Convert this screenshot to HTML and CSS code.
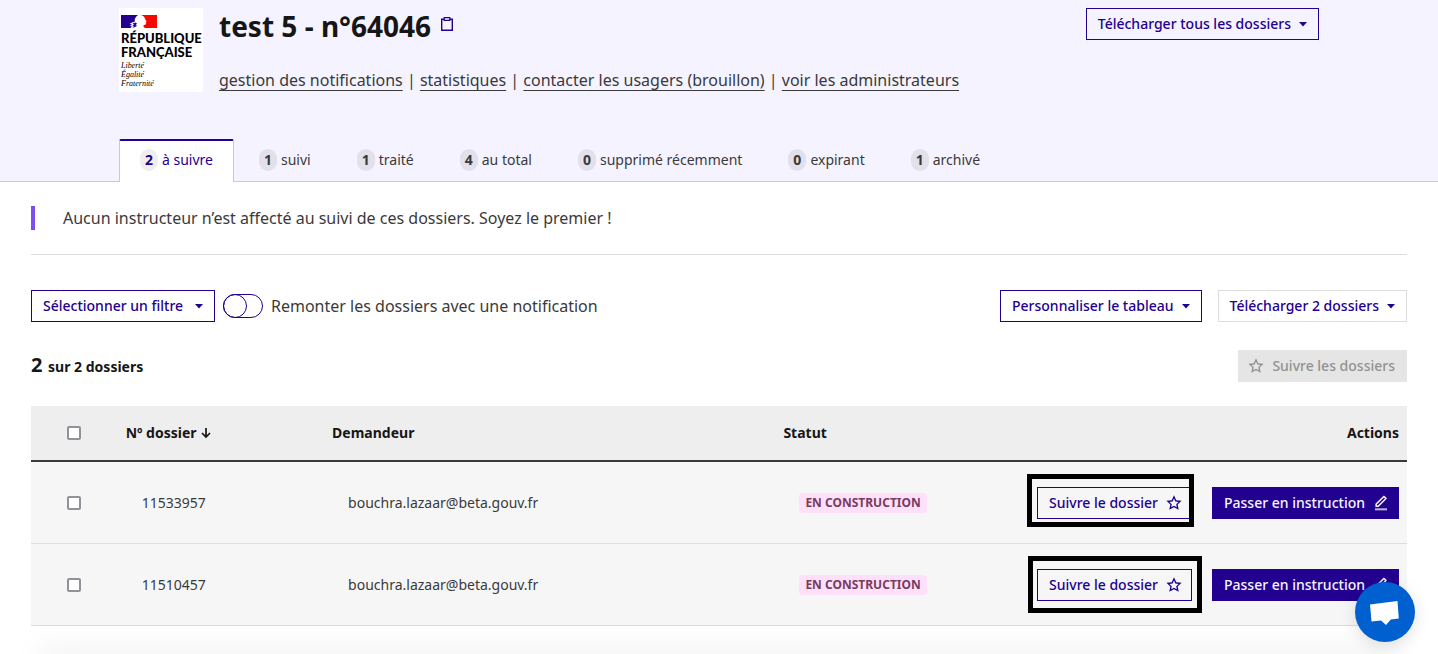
FILE: index.html
```html
<!DOCTYPE html>
<html lang="fr">
<head>
<meta charset="utf-8">
<meta name="viewport" content="width=device-width, initial-scale=1">
<title>test 5 - n°64046</title>
<link rel="stylesheet" href="styles.css">
</head>
<body>
<svg class="sprite" aria-hidden="true">
  <symbol id="caret" viewBox="0 0 8 5"><path d="M0 0h8L4 4.500z"/></symbol>
  <symbol id="star" viewBox="0 0 24 24"><path d="M12 18.300 4.900 22.200 6.500 14.300.6 8.800l8-1L12 .5l3.400 7.300 8 1-5.900 5.500 1.600 7.900zm0-2.300 4.200 2.400-.9-4.700 3.500-3.300-4.800-.6-2-4.400-2 4.400-4.800.6 3.500 3.300-.9 4.700z"/></symbol>
  <symbol id="edit" viewBox="0 0 24 24"><path d="M7.400 15.800 18 5.200l-1.600-1.600L5.800 14.200v1.600zm.9 2.200H3.600v-4.700L15.500 1.400a1.200 1.200 0 0 1 1.800 0l2.900 2.900a1.200 1.200 0 0 1 0 1.800z"/><path opacity=".75" d="M3 20h18v3H3z"/></symbol>
</svg>

<header class="header">
  <div class="container banner">
    <div class="logo">
      <svg class="flag" viewBox="0 0 36 13" aria-hidden="true">
        <path fill="#220090" d="M0 0h17l-2.200 2-1.200 3 .4 1.500L11 7.500 8.500 9l2.500.3L9 11l2 .6-1.500 1.400H0z"/>
        <path fill="#f60700" d="M20 0h16v13H24l-1.500-1.300.2-1.700 1.700-.3.800-1.500-.5-1 1-.7-1.700-2.500C23.800 2 22.500.8 20 0z"/>
        <path fill="#220090" d="m11.500 8.500 3-1 1.500 1-1.500 1.500 1-.2v1.500l-2.500 1.200-2-.3 2.500-1.200-2.500-.3 2-1z"/>
      </svg>
      <strong class="logo-name">RÉPUBLIQUE<br>FRANÇAISE</strong>
      <em class="logo-motto">Liberté<br>Égalité<br>Fraternité</em>
    </div>
    <div class="heading">
      <div class="title-row">
        <h1 class="title">test 5 - n°64046</h1>
        <button class="copy" type="button" aria-label="Copier le numéro">
          <svg viewBox="0 0 12 14" aria-hidden="true"><path d="M.7 2.200h10.600v11.100H.7z" fill="none" stroke="currentColor" stroke-width="1.400"/><path d="M3.200.7h5.600v2.600H3.200z" fill="#f5f3ff" stroke="currentColor" stroke-width="1.200"/></svg>
        </button>
      </div>
      <nav class="links">
        <a href="#">gestion des notifications</a> | <a href="#">statistiques</a> | <a href="#">contacter les usagers (brouillon)</a> | <a href="#">voir les administrateurs</a>
      </nav>
    </div>
    <button class="btn" type="button">Télécharger tous les dossiers <svg class="caret"><use href="#caret"/></svg></button>
  </div>
  <nav class="container tabs">
    <a class="tab tab-active" href="#" aria-current="page"><span class="count">2</span>à suivre</a>
    <a class="tab" href="#"><span class="count">1</span>suivi</a>
    <a class="tab" href="#"><span class="count">1</span>traité</a>
    <a class="tab" href="#"><span class="count">4</span>au total</a>
    <a class="tab" href="#"><span class="count">0</span>supprimé récemment</a>
    <a class="tab" href="#"><span class="count">0</span>expirant</a>
    <a class="tab" href="#"><span class="count">1</span>archivé</a>
  </nav>
</header>

<main class="main">
  <p class="callout">Aucun instructeur n’est affecté au suivi de ces dossiers. Soyez le premier !</p>
  <div class="toolbar">
    <button class="btn btn-filter" type="button">Sélectionner un filtre <svg class="caret"><use href="#caret"/></svg></button>
    <input class="toggle" type="checkbox" id="notif">
    <label class="toggle-label" for="notif">Remonter les dossiers avec une notification</label>
    <div class="toolbar-end">
      <button class="btn" type="button">Personnaliser le tableau <svg class="caret"><use href="#caret"/></svg></button>
      <button class="btn btn-soft" type="button">Télécharger 2 dossiers <svg class="caret"><use href="#caret"/></svg></button>
    </div>
  </div>
  <div class="summary">
    <p class="total"><span class="total-number">2</span> sur 2 dossiers</p>
    <button class="btn btn-disabled" type="button" disabled><svg class="icon"><use href="#star"/></svg>Suivre les dossiers</button>
  </div>

  <table class="table">
    <colgroup><col class="col-check"><col class="col-number"><col class="col-applicant"><col></colgroup>
    <thead>
      <tr>
        <th class="check"><input class="box" type="checkbox" aria-label="Tout sélectionner"></th>
        <th><span class="sort">Nº dossier <svg class="arrow" viewBox="0 0 10 12" aria-hidden="true"><path d="M5 1v9M1 6l4 4 4-4" fill="none" stroke="currentColor" stroke-width="1.700"/></svg></span></th>
        <th>Demandeur</th>
        <th><div class="last-head"><span>Statut</span><span>Actions</span></div></th>
      </tr>
    </thead>
    <tbody>
      <tr>
        <td class="check"><input class="box" type="checkbox" aria-label="Dossier 11533957"></td>
        <td>11533957</td>
        <td>bouchra.lazaar@beta.gouv.fr</td>
        <td class="last"><div class="last-cell"><span class="badge">EN CONSTRUCTION</span>
          <div class="actions">
            <div class="marked"><button class="btn btn-icon" type="button">Suivre le dossier<svg class="icon"><use href="#star"/></svg></button><span class="frame frame-tight"></span></div>
            <button class="btn btn-icon btn-primary" type="button">Passer en instruction<svg class="icon"><use href="#edit"/></svg></button>
          </div></div></td>
      </tr>
      <tr>
        <td class="check"><input class="box" type="checkbox" aria-label="Dossier 11510457"></td>
        <td>11510457</td>
        <td>bouchra.lazaar@beta.gouv.fr</td>
        <td class="last"><div class="last-cell"><span class="badge">EN CONSTRUCTION</span>
          <div class="actions">
            <div class="marked"><button class="btn btn-icon" type="button">Suivre le dossier<svg class="icon"><use href="#star"/></svg></button><span class="frame"></span></div>
            <button class="btn btn-icon btn-primary" type="button">Passer en instruction<svg class="icon"><use href="#edit"/></svg></button>
          </div></div></td>
      </tr>
    </tbody>
  </table>
</main>
<div class="bottom-shade"></div>
<button class="chat" type="button" aria-label="Ouvrir la discussion"><svg viewBox="0 0 60 60" aria-hidden="true"><path fill="#fff" d="m15 22.500 27.500-3.500 1.300 17.500-8 1L31 43l-5-4.500-9.500 1z"/></svg></button>
</body>
</html>
```

FILE: styles.css
```css
* { box-sizing: border-box; }

body {
  margin: 0;
  background: #fff;
  color: #3a3a3a;
  font: 16px/24px "Noto Sans", "Open Sans", sans-serif;
}

h1, p { margin: 0; }
button { font-family: inherit; cursor: pointer; }
.sprite { display: none; }

.header {
  padding-top: 8px;
  background: #f5f3ff;
  box-shadow: inset 0 -1px #cacad2;
}

.container {
  width: calc(100% - 48px);
  max-width: 1200px;
  margin: 0 auto;
}

.banner { display: flex; align-items: flex-start; gap: 16px; }

.logo {
  display: flex;
  flex-direction: column;
  flex: none;
  width: 84px;
  height: 84px;
  padding: 7px 2px 0;
  background: #fff;
  color: #000;
}

.flag { width: 36px; height: 13px; margin-bottom: 3px; }
.logo-name { font: 900 13px/14px Lato, sans-serif; }
.logo-motto { margin-top: 2px; font: italic 8px/9px "Liberation Serif", serif; }

.heading { flex: 1; }
.title-row { display: flex; align-items: center; gap: 10px; margin-bottom: 24px; }
.title { color: #161616; font-size: 28px; line-height: 36px; font-weight: 700; }

.copy { padding: 0; border: 0; background: none; color: #220090; margin-bottom: 4px; }
.copy svg { display: block; width: 12px; height: 14px; }

.links a {
  color: inherit;
  text-decoration-thickness: 1px;
  text-underline-offset: 4px;
  text-decoration-skip-ink: none;
}

.btn {
  display: inline-flex;
  align-items: center;
  gap: 8px;
  min-height: 32px;
  padding: 3px 11px;
  border: 1px solid #220090;
  background: transparent;
  color: #220090;
  font-size: 14px;
  line-height: 24px;
  font-weight: 500;
  white-space: nowrap;
}

.btn-filter { justify-content: space-between; min-width: 184px; }
.btn-icon { padding-right: 9px; }
.btn-soft { border-color: #ddd; }
.btn-primary { background: #220090; color: #f5f5fe; }
.btn-disabled { padding-left: 9px; border-color: #e5e5e5; background: #e5e5e5; color: #929292; }

.caret { width: 8px; height: 5px; fill: currentColor; }
.icon { width: 16px; height: 16px; fill: currentColor; }

.tabs { display: flex; gap: 4px; margin-top: 47px; }

.tab {
  display: flex;
  align-items: center;
  gap: 4px;
  height: 43px;
  padding: 0 20px 4px;
  border: 1px solid transparent;
  border-top-width: 2px;
  border-bottom: 0;
  color: inherit;
  font-size: 14px;
  text-decoration: none;
}

.tab-active {
  border-color: #220090 #cacad2;
  border-radius: 2px 2px 0 0;
  background: #fff;
  color: #220090;
}

.count {
  padding: 0 5px;
  border-radius: 10px;
  background: #e2e0ea;
  font-weight: 700;
  line-height: 22px;
}

.tab-active .count { background: #eee; }

.main { padding: 24px 31px 28px; }

.callout {
  position: relative;
  padding: 0 0 24px 32px;
  border-bottom: 1px solid #ddd;
}

.callout::before {
  content: "";
  position: absolute;
  left: 0;
  top: 0;
  width: 4px;
  height: 24px;
  background: #7b4ff2;
}

.toolbar { display: flex; align-items: center; gap: 8px; margin-top: 35px; }
.toolbar-end { display: flex; gap: 16px; margin-left: auto; }

.toggle {
  appearance: none;
  flex: none;
  width: 40px;
  height: 24px;
  margin: 0;
  border: 1px solid #220090;
  border-radius: 12px;
}

.toggle::before {
  content: "";
  display: block;
  width: 24px;
  height: 24px;
  margin: -1px;
  box-sizing: border-box;
  border: 1px solid #220090;
  border-radius: 12px;
}

.summary { display: flex; align-items: center; justify-content: space-between; margin: 28px 0 24px; }
.total { color: #161616; font-size: 14px; font-weight: 700; }
.total-number { margin-right: 2px; font-size: 20px; }

.table { width: 100%; border-collapse: separate; border-spacing: 0; table-layout: fixed; font-size: 14px; text-align: left; }
.col-check { width: 6.3%; }
.col-number { width: 15%; }
.col-applicant { width: 32.8%; }

.table th {
  height: 56px;
  padding: 0 8px;
  border-bottom: 2px solid #3a3a3a;
  background: #eee;
  color: #161616;
}

.table td { height: 82px; padding: 0 24px; border-bottom: 1px solid #ddd; background: #f6f6f6; }
.table td.last { padding-right: 8px; }
.table .check { padding: 0; text-align: center; }

.box {
  appearance: none;
  display: block;
  width: 14px;
  height: 14px;
  margin: 0 auto;
  border: 2px solid #929099;
  border-radius: 2px;
  background: #fff;
}

.sort { display: inline-flex; align-items: center; gap: 4px; }
.arrow { width: 10px; height: 12px; }
.last-head, .last-cell { display: flex; align-items: center; justify-content: space-between; }

.badge {
  padding: 0 6px;
  border-radius: 4px;
  background: #fee0fa;
  color: #773c5e;
  font-size: 12px;
  line-height: 20px;
  font-weight: 700;
}

.actions { display: flex; gap: 20px; }
.marked { position: relative; }

/* Highlight frames drawn over the follow buttons */
.frame { position: absolute; inset: -13px -10px -12px -9px; border: 5px solid #000; pointer-events: none; }
.frame-tight { inset: -13px -2px -8px -10px; }

.bottom-shade {
  position: fixed;
  left: 40px;
  right: 40px;
  bottom: -8px;
  height: 8px;
  box-shadow: 0 0 32px rgba(0, 0, 0, .16);
  pointer-events: none;
}

.chat {
  position: fixed;
  right: 23px;
  bottom: 12px;
  width: 60px;
  height: 60px;
  padding: 0;
  border: 0;
  border-radius: 50%;
  background: #0060d0;
  box-shadow: 0 4px 16px rgba(0, 0, 0, .12);
}

.chat svg { display: block; width: 60px; height: 60px; }
```
